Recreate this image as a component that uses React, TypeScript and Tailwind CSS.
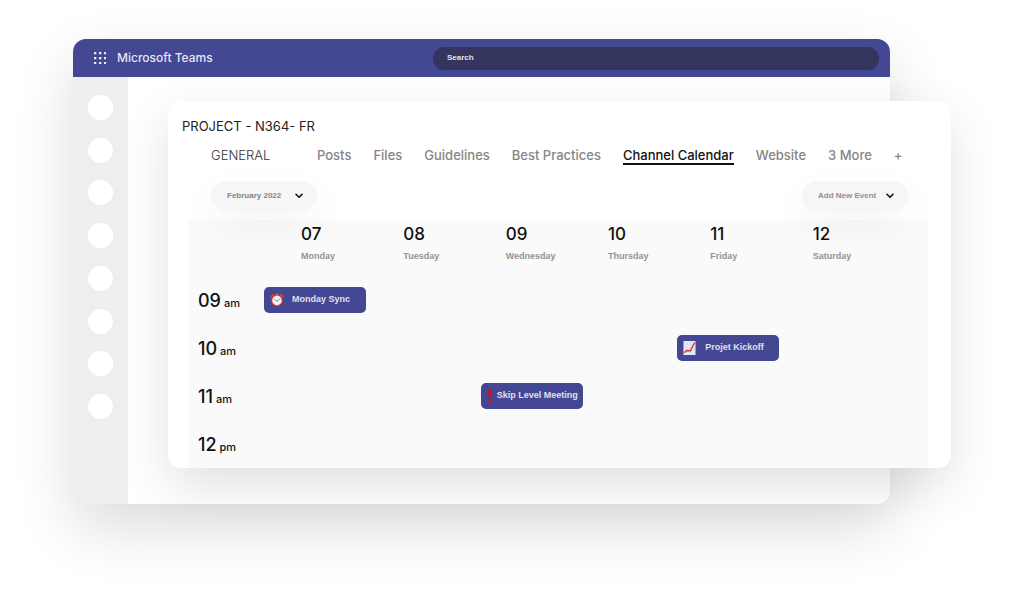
import type { ReactNode } from 'react';

const navItems = ['Activity', 'Chat', 'Teams', 'Calendar', 'Calls', 'Files', 'Apps', 'Help'];

const tabs = ['Posts', 'Files', 'Guidelines', 'Best Practices', 'Channel Calendar', 'Website', '3 More', '+'];

const days = [
  { date: '07', name: 'Monday' },
  { date: '08', name: 'Tuesday' },
  { date: '09', name: 'Wednesday' },
  { date: '10', name: 'Thursday' },
  { date: '11', name: 'Friday' },
  { date: '12', name: 'Saturday' },
];

const hours = [
  { hour: '09', half: 'am' },
  { hour: '10', half: 'am' },
  { hour: '11', half: 'am' },
  { hour: '12', half: 'pm' },
];

type CalendarEvent = {
  date: string;
  hour: string;
  title: string;
  icon: ReactNode;
  spacing: string;
};

function AlarmClockIcon() {
  return (
    <svg viewBox="0 0 28 28" className="size-3.5 shrink-0" aria-hidden="true">
      <path d="M5.5 22.5 3.5 26M22.5 22.5l2 3.5" stroke="#8d2733" strokeWidth="2.6" strokeLinecap="round" />
      <path d="M1.5 10.5a6 6 0 0 1 9-7.5ZM26.5 10.5a6 6 0 0 0-9-7.5Z" fill="#d63a45" />
      <path d="M12.5 1.5h3v3h-3z" fill="#b7a3ac" />
      <circle cx="14" cy="15" r="11.5" fill="#cf4650" />
      <circle cx="14" cy="15" r="9.5" fill="#f6f1ee" />
      <path d="m8.5 12.5 5.5 3.5 6-4" fill="none" stroke="#8b8488" strokeWidth="1.5" strokeLinecap="round" />
      <circle cx="14" cy="15.8" r="1.3" fill="#a3653f" />
    </svg>
  );
}

function ChartIcon() {
  return (
    <svg viewBox="0 0 28 28" className="size-3.5 shrink-0" aria-hidden="true">
      <rect x="1" y="0" width="24" height="28" fill="#e3ecf6" />
      <path d="M2 7h23M2 13.5h23M2 20h23M8 1v26M14 1v26M20 1v26" stroke="#cbd8e9" strokeWidth="0.8" />
      <path d="m3 23.5 4-4.5 8 .5 4-8.5 4.500-8" fill="none" stroke="#d6333b" strokeWidth="2.8" strokeLinejoin="round" />
    </svg>
  );
}

function ExclamationIcon() {
  return (
    <svg viewBox="0 0 12 28" className="h-3.5 w-1.5 shrink-0" aria-hidden="true">
      <path d="M2 4C2 1.5 3.500.8 6 .8S10 1.500 10 4L8 18.500H4Z" fill="#d40d17" />
      <circle cx="6" cy="24" r="3.2" fill="#d40d17" />
    </svg>
  );
}

const events: CalendarEvent[] = [
  { date: '07', hour: '09', title: 'Monday Sync', icon: <AlarmClockIcon />, spacing: 'ml-0 gap-2' },
  { date: '11', hour: '10', title: 'Projet Kickoff', icon: <ChartIcon />, spacing: 'ml-1 gap-2' },
  { date: '09', hour: '11', title: 'Skip Level Meeting', icon: <ExclamationIcon />, spacing: 'ml-3 gap-1' },
];

function WaffleIcon() {
  const steps = [0, 5, 10];
  return (
    <svg viewBox="0 0 12 12" className="size-3" fill="#f2f2fc" aria-hidden="true">
      {steps.map((y) =>
        steps.map((x) => <rect key={`${x}-${y}`} x={x} y={y} width="2.3" height="2.3" rx="0.5" />),
      )}
    </svg>
  );
}

function Chevron({ className = '' }: { className?: string }) {
  return (
    <svg viewBox="0 0 8 6" className={`h-1.5 w-2 ${className}`} fill="none" aria-hidden="true">
      <path d="m1 1.3 3 3 3-3" stroke="#111111" strokeWidth="1.6" strokeLinecap="round" strokeLinejoin="round" />
    </svg>
  );
}

function TopBar() {
  return (
    <header className="flex h-[38px] items-center rounded-t-[13px] bg-[#444791] pr-[11px]">
      <div className="flex w-[360px] shrink-0 items-center gap-[11px] pl-[21px]">
        <button type="button" aria-label="App launcher">
          <WaffleIcon />
        </button>
        <span className="text-xs font-medium text-[#e6e6f6]">Microsoft Teams</span>
      </div>
      <input
        type="search"
        aria-label="Search"
        placeholder="Search"
        className="h-[23px] min-w-0 flex-1 rounded-full bg-[#33355f] px-3.5 pb-0.5 font-['Liberation_Sans',sans-serif] text-[8px] font-bold text-[#e1e1ee] outline-none placeholder:text-[#e1e1ee]"
      />
    </header>
  );
}

function SideNav() {
  return (
    <nav aria-label="Apps" className="w-[55px] shrink-0 rounded-bl-[13px] bg-[#eeeeee] pt-[18px] pl-[15px]">
      <ul className="flex h-[324px] flex-col justify-between">
        {navItems.map((item) => (
          <li key={item} className="flex">
            <button type="button" aria-label={item} className="size-[25px] rounded-full bg-white" />
          </li>
        ))}
      </ul>
    </nav>
  );
}

function Calendar() {
  return (
    <div className="bg-[#fafafa] pr-[50px]">
      <table className="w-full table-fixed border-collapse text-left">
        <thead>
          <tr className="h-14">
            <td className="w-[76px]" />
            {days.map((day) => (
              <th key={day.date} scope="col" className="pl-[37px] align-top font-medium">
                <div className="pt-1 text-[17px] leading-5 text-[#111111]">{day.date}</div>
                <div className="pt-1.5 font-['Liberation_Sans',sans-serif] text-[9px] leading-3 font-bold text-[#949494]">
                  {day.name}
                </div>
              </th>
            ))}
          </tr>
        </thead>
        <tbody>
          {hours.map(({ hour, half }) => (
            <tr key={hour} className="h-12">
              <th scope="row" className="pt-0.5 pl-2.5 font-medium whitespace-nowrap text-[#111111]">
                <span className="flex items-baseline gap-[3px]">
                  <span className="text-[18px] leading-6">{hour}</span>
                  <span className="text-[11px]">{half}</span>
                </span>
              </th>
              {days.map((day) => {
                const event = events.find((e) => e.date === day.date && e.hour === hour);
                return (
                  <td key={day.date} className="pb-px">
                    {event && (
                      <button
                        type="button"
                        className={`flex h-[26px] w-[102px] items-center rounded-[5px] bg-[#444791] pl-1.5 font-['Liberation_Sans',sans-serif] text-[9px] font-bold whitespace-nowrap text-[#e0e0f2] ${event.spacing}`}
                      >
                        {event.icon}
                        {event.title}
                      </button>
                    )}
                  </td>
                );
              })}
            </tr>
          ))}
        </tbody>
      </table>
    </div>
  );
}

function ChannelPanel() {
  return (
    <section className="-mr-[61px] rounded-[13px] bg-white pt-4 shadow-[0_18px_50px_rgba(0,0,0,0.12)]">
      <h1 className="pl-3.5 text-[13px] leading-[18px] text-[#222222]">PROJECT - N364- FR</h1>
      <div className="flex items-center pt-2 pl-[43px]">
        <h2 className="w-[106px] shrink-0 text-[13px] leading-6 font-light text-[#333333]">GENERAL</h2>
        <div role="tablist" aria-label="Channel tabs" className="flex items-center gap-[22px] whitespace-nowrap">
          {tabs.map((tab) => {
            const active = tab === 'Channel Calendar';
            return (
              <button
                key={tab}
                type="button"
                role="tab"
                aria-selected={active}
                className={`border-y-2 border-t-transparent text-[13px] leading-4 font-medium ${
                  active ? 'border-b-[#111111] text-[#111111]' : 'border-b-transparent text-[#858585]'
                }`}
              >
                {tab}
              </button>
            );
          })}
        </div>
      </div>
      <div className="relative z-10 flex justify-between px-[43px] pt-[14px] pb-[9px]">
        <div className="relative flex">
          <select
            aria-label="Month"
            className="h-[30px] w-[106px] appearance-none rounded-full bg-[#f6f6f6] pl-4 font-['Liberation_Sans',sans-serif] text-[8px] leading-4 font-bold text-[#858585] shadow-[0_14px_40px_rgba(0,0,0,0.05)]"
          >
            <option>February 2022</option>
          </select>
          <Chevron className="pointer-events-none absolute top-3 right-3.5" />
        </div>
        <button
          type="button"
          className="flex h-[30px] w-[106px] items-center justify-between rounded-full bg-[#f6f6f6] pr-3.5 pl-4 font-['Liberation_Sans',sans-serif] text-[8px] font-bold text-[#8f8f8f] shadow-[0_14px_40px_rgba(0,0,0,0.05)]"
        >
          Add New Event
          <Chevron />
        </button>
      </div>
      <div className="pr-[23px] pl-5">
        <Calendar />
      </div>
    </section>
  );
}

export default function App() {
  return (
    <div className="min-h-screen overflow-hidden bg-white pt-[39px] pr-[134px] pb-[108px] pl-[73px] font-['Inter','Liberation_Sans',sans-serif]">
      <div className="rounded-[13px] bg-white shadow-[0_24px_60px_rgba(0,0,0,0.14)]">
        <TopBar />
        <div className="flex">
          <SideNav />
          <main className="min-w-0 flex-1 pt-6 pb-9 pl-10">
            <ChannelPanel />
          </main>
        </div>
      </div>
    </div>
  );
}
